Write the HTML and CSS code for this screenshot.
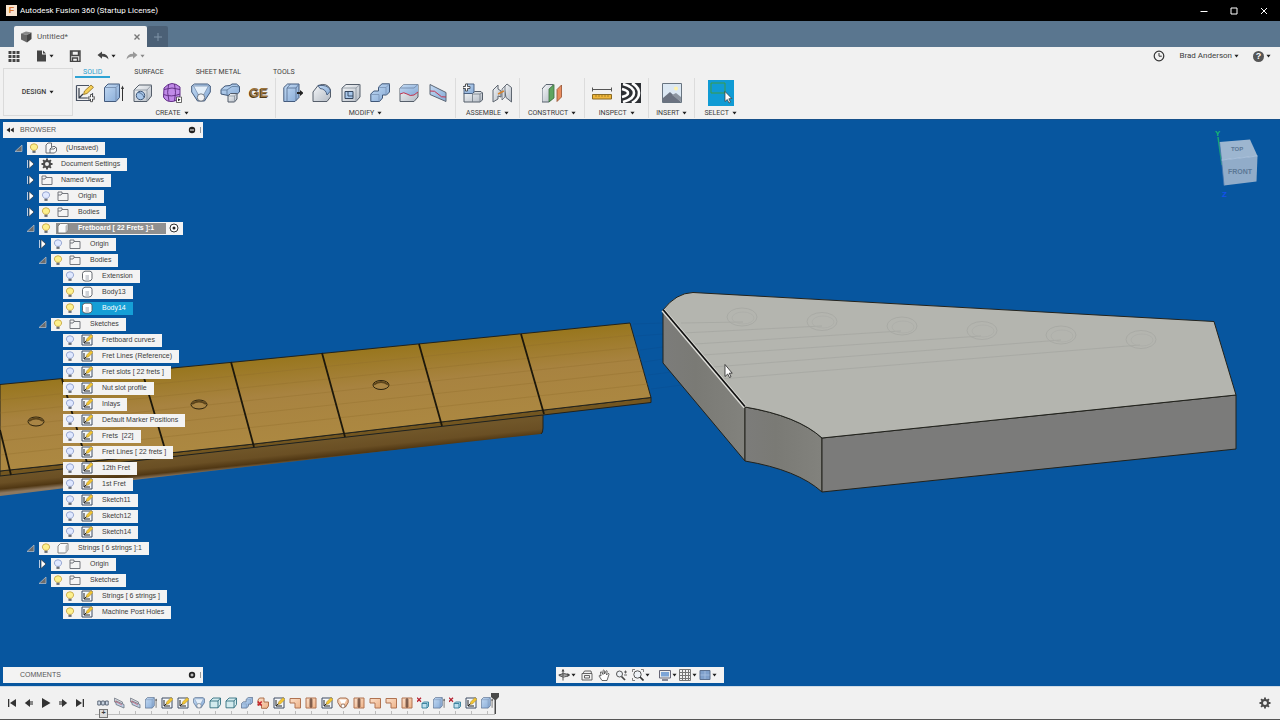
FILE: index.html
```html
<!DOCTYPE html>
<html lang="en">
<head>
<meta charset="utf-8">
<title>Autodesk Fusion 360 (Startup License)</title>
<link rel="stylesheet" href="styles.css">
</head>
<body>
<svg class="defs" aria-hidden="true">
  <defs>
    <linearGradient id="blue" x1="0" y1="0" x2="1" y2="1"><stop offset="0" stop-color="#c3daf3"/><stop offset="1" stop-color="#86aad6"/></linearGradient>
    <linearGradient id="grey" x1="0" y1="0" x2="1" y2="1"><stop offset="0" stop-color="#f6f8fa"/><stop offset="1" stop-color="#b4bbc4"/></linearGradient>
    <linearGradient id="orange" x1="0" y1="0" x2="1" y2="1"><stop offset="0" stop-color="#fbe0cb"/><stop offset="1" stop-color="#eeb287"/></linearGradient>
  </defs>
  <!-- ribbon -->
  <symbol id="r-sketch" viewBox="0 0 20 20"><path d="M1.500 2.500H14M1.500 2.500V17.500H17.500V10" fill="none" stroke="#4a5364" stroke-width="1.200"/><path d="M4 5V15H12M4 15l4-4" fill="none" stroke="#333b48" stroke-width="1.200"/><path d="M8.500 11.500l1-3.500 6.500-6 2.500 2.300-6.500 6.200z" fill="#f6cf55" stroke="#8a6a1c" stroke-width=".8"/><path d="M13 14h2.500v-2.500h2V14H20v2h-2.500v2.700h-2V16H13z" fill="#fff" stroke="#333" stroke-width=".8"/></symbol>
  <symbol id="r-extrude" viewBox="0 0 20 20"><path d="M.5 4.500L4 1h11.500v13.500L12 18.500H.5z" fill="url(#blue)" stroke="#435a7c"/><path d="M.5 4.500H12V18.500M12 4.500L15.500 1" fill="none" stroke="#7189a9" stroke-width=".8"/><path d="M18.500 18V4" stroke="#333" stroke-width="1"/><path d="M17 6l1.500-3.500L20 6z" fill="#333"/></symbol>
  <symbol id="r-revolve" viewBox="0 0 20 20"><path d="M1 7l5-5h12.500v11L14 18.500H1z" fill="url(#grey)" stroke="#555e6a"/><path d="M1 7h13v11M14 7l4.500-5" fill="none" stroke="#89929d" stroke-width=".8"/><circle cx="7.500" cy="12.500" r="4.200" fill="#a8c7ea" stroke="#405878"/><path d="M5 9.500c3 0 5 2 6 5" fill="none" stroke="#405878" stroke-width=".8"/></symbol>
  <symbol id="r-form" viewBox="0 0 20 20"><path d="M2 5q4-4.500 8-4.500T18 4v9q-2 5-8 5.500T1.500 14z" fill="#c08ae8" stroke="#64308a"/><path d="M2 6.500q8-3 16 0M1.500 11.500q8 3 16.500-.5M6.500 2q-2 7 .5 16M12.500 1q2 8 0 17" fill="none" stroke="#5c2a80" stroke-width=".9"/><path d="M14.500 14h5v5.500h-5z" fill="#fff" stroke="#444" stroke-width=".8"/><path d="M16 15.300l2.500 1.500-2.500 1.500z" fill="#222"/></symbol>
  <symbol id="r-loft" viewBox="0 0 20 20"><path d="M.7 3L3.500 1h13L19.300 3v6L13.500 18h-7L.7 9z" fill="url(#blue)" stroke="#435a7c"/><path d="M2.500 3h15l-5 9h-5z" fill="#e4effa" stroke="#6f87a7" stroke-width=".7"/><circle cx="10" cy="14.500" r="3.700" fill="#f2f2f4" stroke="#555e6a" stroke-width=".8"/></symbol>
  <symbol id="r-pipe" viewBox="0 0 20 20"><path d="M1 6.500L5 3l5-.5L12 1h4.500l3 2.500V9l-3.500 3v2h-5v-3l-3 1.500-7-1.500z" fill="url(#blue)" stroke="#3f5677"/><path d="M1 7h6l5-3.500h4l3.500.5M7 7v5" fill="none" stroke="#63809f" stroke-width=".9"/><path d="M8 13l2.500-2.500H17V16l-2.500 3H8z" fill="url(#grey)" stroke="#505a68"/><path d="M8 13h6.500v6M14.500 13l2.500-2.500" fill="none" stroke="#7d8794" stroke-width=".7"/></symbol>
  <symbol id="r-press" viewBox="0 0 20 20"><path d="M.8 4.500L4.500 1H16v13.500L12 18.500H.8z" fill="url(#blue)" stroke="#435a7c"/><path d="M4 18.500V5L7.500 1M4 5h9v13M13 5l3-4" fill="none" stroke="#5d7698" stroke-width=".9"/><path d="M14 9h3V7l3.500 3L17 13v-2h-3z" fill="#222"/></symbol>
  <symbol id="r-fillet" viewBox="0 0 20 20"><path d="M1 9l5-6.500q9-3.500 12.500 4V14L15 18.500H1z" fill="url(#grey)" stroke="#555e6a"/><path d="M6 2.500h5q6 .5 7.500 5.500L15 12q-1-6-7-6.500z" fill="url(#blue)" stroke="#435a7c" stroke-width=".9"/></symbol>
  <symbol id="r-shell" viewBox="0 0 20 20"><path d="M1 5l4-3.500h14V14l-4 4.500H1z" fill="url(#grey)" stroke="#555e6a"/><path d="M1 5h14v13.500M15 5l4-3.500" fill="none" stroke="#89929d" stroke-width=".8"/><path d="M4 8.500h8v7H4z" fill="#a8c7ea" stroke="#34465f"/><path d="M7 8.500V13h5" fill="none" stroke="#34465f" stroke-width=".9"/></symbol>
  <symbol id="r-combine" viewBox="0 0 20 20"><path d="M8.500 4L12 .8h7.500V9L16.500 12H12.500v3L9.500 18.500H.8V11l3-3h4.700z" fill="url(#blue)" stroke="#3f5677"/><path d="M8.500 4.500h7.500V12M16 4.500l3.500-3.500M.8 11.500H9v7" fill="none" stroke="#7893b5" stroke-width=".8"/></symbol>
  <symbol id="r-split" viewBox="0 0 20 20"><path d="M1 5l4-3.500h14V14l-4 4.500H1z" fill="url(#grey)" stroke="#555e6a"/><path d="M1 5l4-3.500h14V9l-4 3q-4 1-7-1t-7 0z" fill="url(#blue)"/><path d="M1 5h14l4-3.500" fill="none" stroke="#6f87a7" stroke-width=".8"/><path d="M1 11q4-2.500 7 0t7 1l4-3" fill="none" stroke="#c2344f"/></symbol>
  <symbol id="r-plane" viewBox="0 0 20 20"><path d="M2 1.500l16 8v9l-16-7z" fill="url(#blue)" stroke="#5b6674"/><path d="M2 8q5-1 8 3t8 3" fill="none" stroke="#c2344f"/></symbol>
  <symbol id="r-joint" viewBox="0 0 20 20"><path d="M1 10h8.500L12 8.500h6L19.500 10v7L17 19H1z" fill="url(#grey)" stroke="#555e6a"/><path d="M1 4l2.500-3H11v8l-1.500 1.500H1z" fill="url(#blue)" stroke="#435a7c" stroke-width=".9"/><path d="M9.500 10.500V19M9.500 11H17v8M17 11l2.500-1.500" fill="none" stroke="#6f7883" stroke-width=".8"/><path d="M0 3.500h2.500V1h2v2.500H7v2H4.500V8h-2V5.500H0z" fill="#fff" stroke="#333" stroke-width=".8"/></symbol>
  <symbol id="r-hinge" viewBox="0 0 20 20"><path d="M1 7l5-5v4l3 2v6l-3-1v3l-5 3z" fill="url(#grey)" stroke="#5f6771"/><path d="M12 4l3-3 4.500 3.500V19L14 14.500z" fill="url(#grey)" stroke="#5f6771"/><path d="M10 6l3-3v11l-3 3z" fill="#d9dde2" stroke="#5f6771" stroke-width=".8"/><path d="M6 11l6-3" stroke="#d6832e" stroke-width="1.500"/></symbol>
  <symbol id="r-construct" viewBox="0 0 20 20"><path d="M0 6l4-4.500h7V15l-4 4H0z" fill="url(#grey)" stroke="#5b6470"/><path d="M7 6l5-4.500V15l-5 4z" fill="#5fa560" stroke="#3c703f" stroke-width=".8"/><path d="M15 6.500L19.500 2v12L15 18.500z" fill="#e98c5e" stroke="#934e2e" stroke-width=".8"/></symbol>
  <symbol id="r-measure" viewBox="0 0 20 20"><path d="M.5 4.500v4M19.500 4.500v4M.5 6.500h19" stroke="#555" stroke-width="1"/><path d="M.5 11.500h19v4.500H.5z" fill="#efb63a" stroke="#8a6b24"/><path d="M4 12v2M7 12v2M10 12v2M13 12v2M16 12v2" stroke="#8a6b24" stroke-width=".7"/></symbol>
  <symbol id="r-zebra" viewBox="0 0 20 20"><path d="M0 0h20v20H0z" fill="#2d3034"/><path d="M1 6q6 1.500 6 4t-6 4M2 1q11 3 11 9T2 19M11 0q7 4 7 10t-7 10" fill="none" stroke="#fff" stroke-width="2.600"/></symbol>
  <symbol id="r-insert" viewBox="0 0 20 20"><path d="M.5.500h19v19H.5z" fill="#dce8f3" stroke="#687480"/><circle cx="14" cy="5.500" r="2" fill="#fff2ab"/><path d="M1 15l7-6 11 10H1z" fill="#6b7280"/><path d="M10 12l4-2 5 4v5z" fill="#8d95a0"/></symbol>
  <symbol id="r-select" viewBox="0 0 26 26"><path d="M0 0h26v26H0z" fill="#109bd4"/><path d="M3 3h14v10H3z" fill="none" stroke="#3c9b46"/><path d="M17 11.500v10l2.300-2 1.700 3.500 1.500-.8-1.700-3.400 3-.3z" fill="#fff" stroke="#333" stroke-width=".7"/></symbol>
  <!-- browser tree -->
  <symbol id="bulb-on" viewBox="0 0 10 12"><path d="M3.300 8Q1 6 1 4.200 1.200 1 5 .8 8.800 1 9 4.200 9 6 6.700 8z" fill="#fdf08c" stroke="#c2a23c" stroke-width=".9"/><path d="M3.300 8.500h3.400v2.300H3.300z" fill="#6b6f76"/></symbol>
  <symbol id="bulb-off" viewBox="0 0 10 12"><path d="M3.300 8Q1 6 1 4.200 1.200 1 5 .8 8.800 1 9 4.200 9 6 6.700 8z" fill="#dfe8ff" stroke="#8798c8" stroke-width=".9"/><path d="M3.300 8.500h3.400v2.300H3.300z" fill="#6b6f76"/></symbol>
  <symbol id="folder" viewBox="0 0 12 12"><path d="M1 10.500V2h4v1.500h6v7zM5 3.500L4 5H1" fill="#f4f4f4" stroke="#666a70" stroke-width=".9"/></symbol>
  <symbol id="doc" viewBox="0 0 12 12"><path d="M1 10.500V3L3 1h3.500v4.500L8 4.500h2L11.500 6v3L9.500 11H1zM6.500 5.500L5 7v4M5 7h4l2-2" fill="#f8f8f8" stroke="#5c6066" stroke-width=".9"/></symbol>
  <symbol id="gear" viewBox="0 0 12 12"><path d="M6 .5v11M.5 6h11M2.100 2.100l7.800 7.800M9.900 2.100l-7.800 7.800" stroke="#4a4a4a" stroke-width="1.900"/><circle cx="6" cy="6" r="3" fill="#f0f0f0" stroke="#4a4a4a" stroke-width="2"/></symbol>
  <symbol id="comp" viewBox="0 0 12 12"><path d="M1 4l2.500-2.500H11V8l-2.500 3H1z" fill="#fafafa" stroke="#777" stroke-width=".9"/><path d="M8.500 4L11 1.500V8l-2.500 3z" fill="#bbb"/></symbol>
  <symbol id="body" viewBox="0 0 12 12"><path d="M1.500 3.500Q2 1.500 4 1.200h5Q11 1.500 11 3.500v5Q10.500 11 8 11H4Q1.500 10.800 1.500 8.500z" fill="#fff" stroke="#555a61" stroke-width=".9"/><path d="M4.500 5H8v5.500H4.500z" fill="#d0d3d8"/></symbol>
  <symbol id="sketch" viewBox="0 0 12 12"><path d="M1 1h10v10H1z" fill="#f4f7fa" stroke="#3e4c62"/><path d="M3 3v6h6M3 9l3-3" fill="none" stroke="#222"/><path d="M5 7.500L5.500 5 10 .5 12 2.500 7.500 7z" fill="#f2c432" stroke="#8a7434" stroke-width=".4"/></symbol>
  <symbol id="closed" viewBox="0 0 10 10"><path d="M2.500 1v8" stroke="#b9cbe2"/><path d="M4 .5L9 5 4 9.500z" fill="#fff" stroke="#28303c" stroke-width=".7"/></symbol>
  <symbol id="open" viewBox="0 0 10 10"><path d="M9 2v6.500H2z" fill="#6c6c6c" stroke="#b9c3cf" stroke-width=".7"/></symbol>
  <!-- timeline -->
  <symbol id="t-group" viewBox="0 0 12 12"><path d="M.8 4h2.600v4H.8zM4.700 4h2.600v4H4.700zM8.600 4h2.600v4H8.600z" fill="#dfe9f5" stroke="#4c586a" stroke-width=".9"/></symbol>
  <symbol id="t-plane" viewBox="0 0 12 12"><path d="M1.500 1l8 4v4.500l-8-4.500z" fill="#cfd3d9" stroke="#777e89" stroke-width=".8"/><path d="M3 4l8 3.500v3.500L3 7.500z" fill="#bfd0e6" stroke="#6b7480" stroke-width=".8"/><path d="M2 4l7 4" stroke="#cc6273" stroke-width=".8"/></symbol>
  <symbol id="t-copy" viewBox="0 0 12 12"><path d="M1 4l3-3h7.500v6.500L9 10.800H1zM1 4h8v6.800M9 4l2.500-3" fill="#d3ebee" stroke="#347080" stroke-width=".9"/></symbol>
  <symbol id="t-cut" viewBox="0 0 12 12"><path d="M1 3l1.500-2H7v4h4.500v4L10 11.300H4.500V8H1z" fill="url(#orange)" stroke="#a5643e" stroke-width=".9"/><path d="M.7 4.500l4 4M4.700 4.500l-4 4" stroke="#c5202b" stroke-width="1.500"/></symbol>
  <symbol id="t-face" viewBox="0 0 12 12"><path d="M1 1.500h10.500V11H6V6H1z" fill="url(#orange)" stroke="#b07351"/></symbol>
  <symbol id="t-stitch" viewBox="0 0 12 12"><path d="M1 1h10v10H1z" fill="url(#orange)" stroke="#b07351"/><path d="M6 1v10M4.300 3h3.400M4.300 5h3.400M4.300 7h3.400M4.300 9h3.400" stroke="#503226" stroke-width=".9"/></symbol>
  <symbol id="t-oloft" viewBox="0 0 12 12"><path d="M.8 2.500L3 1h6l2.200 1.500v3L8.500 10h-5L.8 5.500z" fill="url(#orange)" stroke="#9b6244" stroke-width=".9"/><path d="M2.500 2.500h7l-2 4h-3z" fill="#fff"/><circle cx="6" cy="9" r="2" fill="#fff" stroke="#765543" stroke-width=".7"/></symbol>
  <symbol id="t-remove" viewBox="0 0 12 12"><path d="M5 6.500l1.500-1.500H11.500v4.500L10 11H5zM5 6.500h5V11" fill="#bfe1ef" stroke="#2f7c97" stroke-width=".9"/><path d="M0 .7l4 4M4 .7l-4 4" stroke="#b5202f" stroke-width="1.300"/></symbol>
  <symbol id="down" viewBox="0 0 6 4"><path d="M.5.500h5L3 3.700z" fill="#222"/></symbol>
</svg>

<header class="titlebar">
  <span class="logo">F</span>
  <h1>Autodesk Fusion 360 (Startup License)</h1>
  <div class="winbtns">
    <button aria-label="Minimize"><svg viewBox="0 0 8 8"><path d="M.5 4.500h7"/></svg></button>
    <button aria-label="Maximize"><svg viewBox="0 0 8 8"><path d="M1 1h6v6H1z"/></svg></button>
    <button aria-label="Close"><svg viewBox="0 0 8 8"><path d="M1 1l6 6M7 1L1 7"/></svg></button>
  </div>
</header>

<nav class="doctabs" aria-label="Documents">
  <div class="doctab">
    <svg class="i12" viewBox="0 0 12 12"><path d="M1 2.500L6 .5l5.500 1L7 4z" fill="#888"/><path d="M1 2.500L7 4v7.500L1 8.500z" fill="#666"/><path d="M7 4l4.500-2.500V8L7 11.500z" fill="#444"/></svg>
    <span>Untitled*</span>
    <button aria-label="Close document"><svg class="i8" viewBox="0 0 8 8"><path d="M1.500 1.500l5 5M6.500 1.500l-5 5" stroke="#777" stroke-width="1.400"/></svg></button>
  </div>
  <button class="newtab" aria-label="New document"><svg class="i8" viewBox="0 0 8 8"><path d="M4 0v8M0 4h8" stroke="#8094a8"/></svg></button>
</nav>

<div class="quick">
  <button class="q-grid" aria-label="Data panel"><svg class="i12" viewBox="0 0 12 12"><path d="M.5 1h3v3h-3zM4.500 1h3v3h-3zM8.500 1h3v3h-3zM.5 5h3v3h-3zM4.500 5h3v3h-3zM8.500 5h3v3h-3zM.5 9h3v3h-3zM4.500 9h3v3h-3zM8.500 9h3v3h-3z" fill="#444"/></svg></button>
  <button class="q-file" aria-label="File"><svg class="i12" viewBox="0 0 12 12"><path d="M2 .5h5v4h4v7H2zM8 .5L11 3.500H8z" fill="#444"/></svg><svg class="dn"><use href="#down"/></svg></button>
  <button class="q-save" aria-label="Save"><svg class="i12" viewBox="0 0 12 12"><path d="M1.500 1v10.500h9.500V1zM3 1.500v4h6.500v-4M3.500 11V8h5v3" fill="none" stroke="#444" stroke-width="1.400"/></svg></button>
  <button class="q-undo" aria-label="Undo"><svg class="i12" viewBox="0 0 12 12"><path d="M.5 5L5 1.500v2.300q6 0 6.500 5.700Q9.500 6.500 5 6.500v2.200z" fill="#444"/></svg><svg class="dn"><use href="#down"/></svg></button>
  <button class="q-redo" aria-label="Redo" disabled><svg class="i12" viewBox="0 0 12 12"><path d="M11.500 5L7 1.500v2.300q-6 0-6.500 5.700Q2.500 6.500 7 6.500v2.200z" fill="#999"/></svg><svg class="dn"><use href="#down"/></svg></button>
  <div class="account">
    <button aria-label="Job status"><svg class="i12" viewBox="0 0 12 12"><circle cx="6" cy="6" r="4.800" fill="none" stroke="#333" stroke-width="1.200"/><path d="M6 3v3.200h2.800" fill="none" stroke="#333"/></svg></button>
    <button class="user">Brad Anderson<svg class="dn"><use href="#down"/></svg></button>
    <button aria-label="Help"><span class="help">?</span><svg class="dn"><use href="#down"/></svg></button>
  </div>
</div>

<div class="ribbon">
  <button class="design">DESIGN<svg class="dn"><use href="#down"/></svg></button>
  <div class="ribmain">
    <div class="ribtabs" role="tablist">
      <button role="tab" aria-selected="true" class="on">SOLID</button>
      <button role="tab">SURFACE</button>
      <button role="tab">SHEET METAL</button>
      <button role="tab">TOOLS</button>
    </div>
    <div class="groups">
      <section class="group g-create"><div class="tools">
        <button aria-label="Create sketch"><svg><use href="#r-sketch"/></svg></button><button aria-label="Extrude"><svg><use href="#r-extrude"/></svg></button><button aria-label="Revolve"><svg><use href="#r-revolve"/></svg></button><button aria-label="Create form"><svg><use href="#r-form"/></svg></button><button aria-label="Loft"><svg><use href="#r-loft"/></svg></button><button aria-label="Pipe"><svg><use href="#r-pipe"/></svg></button><button class="ge" aria-label="Gear">GE</button></div>
        <button class="glabel">CREATE<svg class="dn"><use href="#down"/></svg></button></section>
      <section class="group"><div class="tools">
        <button aria-label="Press pull"><svg><use href="#r-press"/></svg></button><button aria-label="Fillet"><svg><use href="#r-fillet"/></svg></button><button aria-label="Shell"><svg><use href="#r-shell"/></svg></button><button aria-label="Combine"><svg><use href="#r-combine"/></svg></button><button aria-label="Split body"><svg><use href="#r-split"/></svg></button><button aria-label="Split face"><svg><use href="#r-plane"/></svg></button></div>
        <button class="glabel">MODIFY<svg class="dn"><use href="#down"/></svg></button></section>
      <section class="group"><div class="tools">
        <button aria-label="New component"><svg><use href="#r-joint"/></svg></button><button aria-label="Joint"><svg><use href="#r-hinge"/></svg></button></div>
        <button class="glabel">ASSEMBLE<svg class="dn"><use href="#down"/></svg></button></section>
      <section class="group wide"><div class="tools">
        <button aria-label="Offset plane"><svg><use href="#r-construct"/></svg></button></div>
        <button class="glabel">CONSTRUCT<svg class="dn"><use href="#down"/></svg></button></section>
      <section class="group"><div class="tools">
        <button aria-label="Measure"><svg><use href="#r-measure"/></svg></button><button aria-label="Zebra analysis"><svg><use href="#r-zebra"/></svg></button></div>
        <button class="glabel">INSPECT<svg class="dn"><use href="#down"/></svg></button></section>
      <section class="group"><div class="tools">
        <button aria-label="Insert image"><svg><use href="#r-insert"/></svg></button></div>
        <button class="glabel">INSERT<svg class="dn"><use href="#down"/></svg></button></section>
      <section class="group last"><div class="tools">
        <button aria-label="Select"><svg class="i26"><use href="#r-select"/></svg></button></div>
        <button class="glabel">SELECT<svg class="dn"><use href="#down"/></svg></button></section>
    </div>
  </div>
</div>

<main class="viewport">
  <svg class="scene" viewBox="0 120 1280 566" preserveAspectRatio="xMinYMin slice" role="img" aria-label="Fretboard and headstock model">
    <defs>
      <linearGradient id="wood" gradientUnits="userSpaceOnUse" x1="300" y1="355" x2="308" y2="438"><stop offset="0" stop-color="#98761d"/><stop offset=".45" stop-color="#a88340"/><stop offset="1" stop-color="#ac8841"/></linearGradient>
      <linearGradient id="neck" gradientUnits="userSpaceOnUse" x1="300" y1="443" x2="302" y2="463"><stop offset="0" stop-color="#705629"/><stop offset=".5" stop-color="#6a4f24"/><stop offset=".8" stop-color="#503713"/><stop offset="1" stop-color="#8d7860"/></linearGradient>
      <linearGradient id="side" x1="0" y1="0" x2="1" y2="0"><stop offset="0" stop-color="#7c7c7a"/><stop offset=".4" stop-color="#7a7a75"/><stop offset="1" stop-color="#82827d"/></linearGradient>
    </defs>
    <path d="M0 476L543 415V428Q543 433 541 434Q300 460 0 496z" fill="url(#neck)"/>
    <path d="M543 415V428Q543 433 541 434" fill="none" class="edge"/>
    <path d="M0 471L254 444 441 422 651 397.500V402.500L543 415 0 476z" fill="#735620" class="edge"/>
    <path d="M0 384.500L230 362.500 418 344 630 323 651 397.500 441 422 254 444 0 471z" fill="url(#wood)" class="edge"/>
    <g stroke="#8e6d2b" stroke-opacity=".35" stroke-width="1"><path d="M0 400L633 335M0 413L637 347M0 427L641 359M0 441L644 371M0 455L648 384"/></g>
    <g stroke="#1d180b" stroke-width="1.800"><path d="M0 430L11 475M62 379L88 466M142 371L167 456M231 362L254 447M322 353L345 437M419 344L442 426M521 334L544 414"/></g>
    <g fill="#a98545" stroke="#2b220d"><ellipse cx="381" cy="385" rx="8" ry="4.500"/><ellipse cx="199" cy="404.500" rx="8" ry="4.500"/><ellipse cx="36" cy="421.500" rx="8" ry="4.500"/></g>
    <g fill="none" stroke="#5c441a" stroke-width="2"><path d="M374 384.500q7-5 14 0M192 404q7-5 14 0M29 421q7-5 14 0"/></g>
    <g stroke="#0a4a8c" stroke-opacity=".35"><path d="M633 324L663 323M636 336L663 334M640 350L663 347M644 362L663 359M648 375L680 371M651 389L690 384"/></g>

    <path d="M663 310L745 407V461L663 363z" fill="url(#side)" class="edge"/>
    <path d="M745 407Q798 416 822 438V492Q798 470 745 461z" fill="url(#side)" class="edge"/>
    <path d="M822 438L1236 395V449L822 492z" fill="#7b7b7a" class="edge"/>
    <path d="M663 310Q676 293 693 292.500L1214 321.500 1236 395 822 438Q798 416 745 407z" fill="#b4b5af" class="edge"/>
    <g fill="none" stroke="#a6a7a2" stroke-width=".8"><path d="M743 322L681 323M822 326L683 333M901 331L695 344M981 336L703 355M1061 340L713 367M1140 345L721 379"/>
      <ellipse cx="742" cy="317" rx="15" ry="9"/><ellipse cx="822" cy="321.500" rx="15" ry="9"/><ellipse cx="902" cy="326" rx="15" ry="9"/><ellipse cx="982" cy="330.500" rx="15" ry="9"/><ellipse cx="1061" cy="335" rx="15" ry="9"/><ellipse cx="1141" cy="339.500" rx="15" ry="9"/></g>
    <g fill="none" stroke="#acada8" stroke-width=".8"><ellipse cx="743" cy="318" rx="11" ry="6"/><ellipse cx="823" cy="322" rx="11" ry="6"/><ellipse cx="903" cy="327" rx="11" ry="6"/><ellipse cx="983" cy="331" rx="11" ry="6"/><ellipse cx="1062" cy="336" rx="11" ry="6"/><ellipse cx="1142" cy="340" rx="11" ry="6"/></g>
    <path d="M663 310L745 407" stroke="#deded9" stroke-width="4"/><path d="M663 309.500L745 406.500" stroke="#111" stroke-width="1.800"/>
    <path d="M725 364.500v12l2.700-2.500 1.800 3.500 1.500-.8-1.800-3.500h3z" fill="#fff" stroke="#222" stroke-width=".8"/>

    <path d="M1222 165L1218 137" stroke="#18a873" stroke-width="1.500"/>
    <path d="M1219.500 142L1250 139.500 1257.500 156 1221.500 160z" fill="#9db6d0"/>
    <path d="M1221.500 160L1257.500 156 1256.500 181.500 1224 185.500z" fill="#91acc9"/>
    <path d="M1219.500 142L1221.500 160 1224 185.500" fill="none" stroke="#4475ae" stroke-width=".8"/>
    <path d="M1221.500 160L1257.500 156" stroke="#c0d0e4" stroke-width=".7"/>
    <text class="cube top" x="1231" y="151">TOP</text><text class="cube" x="1228" y="174">FRONT</text>
    <text class="axis" x="1215" y="136" fill="#18b873">Y</text><text class="axis" x="1222" y="197" fill="#1450ee">Z</text>
  </svg>

  <aside class="browser">
    <div class="panelbar">
      <svg class="i8" viewBox="0 0 8 8"><path d="M4 1.500v5L.5 4zM7.800 1.500v5L4.300 4z" fill="#222"/></svg>
      <h2>BROWSER</h2>
      <button aria-label="Collapse"><svg class="i8" viewBox="0 0 8 8"><circle cx="4" cy="4" r="3.200" fill="#222"/><path d="M2 4h4" stroke="#fff"/></svg></button><i class="grip"></i>
    </div>
    <ul class="tree">
      <li><div class="row"><svg class="tw"><use href="#open"/></svg><div class="box"><svg class="bulb"><use href="#bulb-on"/></svg><svg class="ico"><use href="#doc"/></svg><span>(Unsaved)</span></div></div>
      <ul>
        <li><div class="row"><svg class="tw"><use href="#closed"/></svg><div class="box nobulb"><svg class="ico"><use href="#gear"/></svg><span>Document Settings</span></div></div></li>
        <li><div class="row"><svg class="tw"><use href="#closed"/></svg><div class="box nobulb"><svg class="ico"><use href="#folder"/></svg><span>Named Views</span></div></div></li>
        <li><div class="row"><svg class="tw"><use href="#closed"/></svg><div class="box"><svg class="bulb"><use href="#bulb-off"/></svg><svg class="ico"><use href="#folder"/></svg><span>Origin</span></div></div></li>
        <li><div class="row"><svg class="tw"><use href="#closed"/></svg><div class="box"><svg class="bulb"><use href="#bulb-on"/></svg><svg class="ico"><use href="#folder"/></svg><span>Bodies</span></div></div></li>
        <li><div class="row"><svg class="tw"><use href="#open"/></svg><div class="box active"><svg class="bulb"><use href="#bulb-on"/></svg><div class="hl"><svg class="ico"><use href="#comp"/></svg><span>Fretboard [ 22 Frets ]:1</span></div><svg class="i10" viewBox="0 0 10 10"><circle cx="5" cy="5" r="4" fill="#fff" stroke="#333"/><circle cx="5" cy="5" r="1.500" fill="#222"/></svg></div></div>
        <ul>
          <li><div class="row"><svg class="tw"><use href="#closed"/></svg><div class="box"><svg class="bulb"><use href="#bulb-off"/></svg><svg class="ico"><use href="#folder"/></svg><span>Origin</span></div></div></li>
          <li><div class="row"><svg class="tw"><use href="#open"/></svg><div class="box"><svg class="bulb"><use href="#bulb-on"/></svg><svg class="ico"><use href="#folder"/></svg><span>Bodies</span></div></div>
          <ul>
            <li><div class="row leaf"><div class="box"><svg class="bulb"><use href="#bulb-off"/></svg><svg class="ico"><use href="#body"/></svg><span>Extension</span></div></div></li>
            <li><div class="row leaf"><div class="box"><svg class="bulb"><use href="#bulb-on"/></svg><svg class="ico"><use href="#body"/></svg><span>Body13</span></div></div></li>
            <li><div class="row leaf"><div class="box picked"><svg class="bulb"><use href="#bulb-on"/></svg><div class="hl"><svg class="ico"><use href="#body"/></svg><span>Body14</span></div></div></div></li>
          </ul></li>
          <li><div class="row"><svg class="tw"><use href="#open"/></svg><div class="box"><svg class="bulb"><use href="#bulb-on"/></svg><svg class="ico"><use href="#folder"/></svg><span>Sketches</span></div></div>
          <ul>
            <li><div class="row leaf"><div class="box"><svg class="bulb"><use href="#bulb-off"/></svg><svg class="ico"><use href="#sketch"/></svg><span>Fretboard curves</span></div></div></li>
            <li><div class="row leaf"><div class="box"><svg class="bulb"><use href="#bulb-off"/></svg><svg class="ico"><use href="#sketch"/></svg><span>Fret Lines (Reference)</span></div></div></li>
            <li><div class="row leaf"><div class="box"><svg class="bulb"><use href="#bulb-off"/></svg><svg class="ico"><use href="#sketch"/></svg><span>Fret slots [ 22 frets ]</span></div></div></li>
            <li><div class="row leaf"><div class="box"><svg class="bulb"><use href="#bulb-off"/></svg><svg class="ico"><use href="#sketch"/></svg><span>Nut slot profile</span></div></div></li>
            <li><div class="row leaf"><div class="box"><svg class="bulb"><use href="#bulb-off"/></svg><svg class="ico"><use href="#sketch"/></svg><span>Inlays</span></div></div></li>
            <li><div class="row leaf"><div class="box"><svg class="bulb"><use href="#bulb-off"/></svg><svg class="ico"><use href="#sketch"/></svg><span>Default Marker Positions</span></div></div></li>
            <li><div class="row leaf"><div class="box"><svg class="bulb"><use href="#bulb-off"/></svg><svg class="ico"><use href="#sketch"/></svg><span>Frets&nbsp; [22]</span></div></div></li>
            <li><div class="row leaf"><div class="box"><svg class="bulb"><use href="#bulb-off"/></svg><svg class="ico"><use href="#sketch"/></svg><span>Fret Lines [ 22 frets ]</span></div></div></li>
            <li><div class="row leaf"><div class="box"><svg class="bulb"><use href="#bulb-off"/></svg><svg class="ico"><use href="#sketch"/></svg><span>12th Fret</span></div></div></li>
            <li><div class="row leaf"><div class="box"><svg class="bulb"><use href="#bulb-off"/></svg><svg class="ico"><use href="#sketch"/></svg><span>1st Fret</span></div></div></li>
            <li><div class="row leaf"><div class="box"><svg class="bulb"><use href="#bulb-off"/></svg><svg class="ico"><use href="#sketch"/></svg><span>Sketch11</span></div></div></li>
            <li><div class="row leaf"><div class="box"><svg class="bulb"><use href="#bulb-off"/></svg><svg class="ico"><use href="#sketch"/></svg><span>Sketch12</span></div></div></li>
            <li><div class="row leaf"><div class="box"><svg class="bulb"><use href="#bulb-off"/></svg><svg class="ico"><use href="#sketch"/></svg><span>Sketch14</span></div></div></li>
          </ul></li>
        </ul></li>
        <li><div class="row"><svg class="tw"><use href="#open"/></svg><div class="box"><svg class="bulb"><use href="#bulb-on"/></svg><svg class="ico"><use href="#comp"/></svg><span>Strings [ 6 strings ]:1</span></div></div>
        <ul>
          <li><div class="row"><svg class="tw"><use href="#closed"/></svg><div class="box"><svg class="bulb"><use href="#bulb-off"/></svg><svg class="ico"><use href="#folder"/></svg><span>Origin</span></div></div></li>
          <li><div class="row"><svg class="tw"><use href="#open"/></svg><div class="box"><svg class="bulb"><use href="#bulb-on"/></svg><svg class="ico"><use href="#folder"/></svg><span>Sketches</span></div></div>
          <ul>
            <li><div class="row leaf"><div class="box"><svg class="bulb"><use href="#bulb-on"/></svg><svg class="ico"><use href="#sketch"/></svg><span>Strings [ 6 strings ]</span></div></div></li>
            <li><div class="row leaf"><div class="box"><svg class="bulb"><use href="#bulb-on"/></svg><svg class="ico"><use href="#sketch"/></svg><span>Machine Post Holes</span></div></div></li>
          </ul></li>
        </ul></li>
      </ul></li>
    </ul>
  </aside>

  <div class="bottombar">
    <div class="panelbar comments">
      <h2>COMMENTS</h2>
      <button aria-label="Expand comments"><svg class="i8" viewBox="0 0 8 8"><circle cx="4" cy="4" r="3.200" fill="#222"/><path d="M2.500 4h3M4 2.500v3" stroke="#fff" stroke-width=".9"/></svg></button><i class="grip"></i>
    </div>
    <div class="navbar">
      <button aria-label="Orbit"><svg class="i12" viewBox="0 0 12 12"><path d="M5 .5v11M1 6q4-3 9.500-.5M1 6.500q4 3 9 .5M.5 6h11" fill="none" stroke="#444" stroke-width=".9"/><path d="M3.500 2.500L5 0l1.500 2.500zM9.500 4l2.500 2-2.500 2z" fill="#444"/></svg><svg class="dn"><use href="#down"/></svg></button>
      <button aria-label="Look at"><svg class="i12" viewBox="0 0 12 12"><path d="M1 4.500h10V11H1zM3.500 6.500h5v2.500h-5zM2 4.500L3.500 2H10l.5 2.500" fill="none" stroke="#555" stroke-width=".9"/></svg></button>
      <button aria-label="Pan"><svg class="i12" viewBox="0 0 12 12"><path d="M4 11.500L1 7q0-1.500 2 0L2.500 3q.5-1 1.200 0L5 5.500 5 1.500q.7-1 1.300 0l.3 3.500L8 2q1-.8 1.200.4L8.500 6 10 4.500q1.200-.2 1 .8L9 11.500z" fill="#fff" stroke="#444" stroke-width=".8"/></svg></button>
      <button aria-label="Zoom"><svg class="i12" viewBox="0 0 12 12"><circle cx="4.500" cy="5" r="3" fill="#eef2f6" stroke="#555"/><path d="M6.500 7.500L10 11" stroke="#444" stroke-width="1.700"/><path d="M9 3h3M10.500 1.500v3M9 6h3" stroke="#444" stroke-width=".8"/></svg></button>
      <button aria-label="Fit"><svg class="i12" viewBox="0 0 12 12"><path d="M.5 3V.5H3M9 .5h2.500V3M.5 9v2.500H3" fill="none" stroke="#666" stroke-width=".8"/><circle cx="5.500" cy="5.500" r="3.700" fill="#eef2f6" stroke="#555"/><path d="M8 8l3.500 3.500" stroke="#333" stroke-width="1.700"/></svg><svg class="dn"><use href="#down"/></svg></button>
      <button class="sp" aria-label="Display settings"><svg class="i12" viewBox="0 0 12 12"><path d="M.5 1.500h11v7.500H.5z" fill="#eee" stroke="#667"/><path d="M2 3h8v4.500H2z" fill="#7da4d6"/><path d="M3 11h6" stroke="#667" stroke-width="1.500"/></svg><svg class="dn"><use href="#down"/></svg></button>
      <button class="tight" aria-label="Grid"><svg class="i12" viewBox="0 0 12 12"><path d="M.5.500v11M3.500.500v11M6.500.500v11M9.500.500v11M.5.500h11M.5 3.500h11M.5 6.500h11M.5 9.500h11M11.500.500v11M.5 11.500h11" stroke="#777" fill="none"/></svg><svg class="dn"><use href="#down"/></svg></button>
      <button class="tight" aria-label="Viewports"><svg class="i12" viewBox="0 0 12 12"><path d="M1 1.500h10v9H1z" fill="#7fa0cc" stroke="#5d718f"/><path d="M6 2v8M1.500 6h9" stroke="#a8c1e2" stroke-width=".8"/></svg><svg class="dn"><use href="#down"/></svg></button>
    </div>
  </div>
</main>

<footer class="timeline">
  <div class="play">
    <button aria-label="First"><svg class="i10" viewBox="0 0 10 10"><path d="M1 1h1.300v8H1zM9 1v8L3 5z" fill="#333"/></svg></button>
    <button aria-label="Previous"><svg class="i10" viewBox="0 0 10 10"><path d="M6 1v8L.8 5z" fill="#333"/><path d="M6 3h3v4H6z" fill="#888"/></svg></button>
    <button aria-label="Play"><svg class="i10" viewBox="0 0 10 10"><path d="M1 0v10L9.500 5z" fill="#333"/></svg></button>
    <button aria-label="Next"><svg class="i10" viewBox="0 0 10 10"><path d="M4 1v8l5.200-4z" fill="#333"/><path d="M1 3h3v4H1z" fill="#888"/></svg></button>
    <button aria-label="Last"><svg class="i10" viewBox="0 0 10 10"><path d="M7.700 1H9v8H7.700zM1 1v8l6-4z" fill="#333"/></svg></button>
  </div>
  <ol class="steps">
    <li class="first"><svg><use href="#t-group"/></svg></li>
    <li><svg><use href="#t-plane"/></svg></li><li><svg><use href="#t-plane"/></svg></li>
    <li><svg><use href="#r-extrude"/></svg></li>
    <li><svg><use href="#sketch"/></svg></li><li><svg><use href="#sketch"/></svg></li>
    <li><svg><use href="#r-loft"/></svg></li>
    <li><svg><use href="#t-copy"/></svg></li><li><svg><use href="#t-copy"/></svg></li>
    <li><svg><use href="#r-combine"/></svg></li>
    <li><svg><use href="#t-cut"/></svg></li>
    <li><svg><use href="#sketch"/></svg></li>
    <li><svg><use href="#t-face"/></svg></li><li><svg><use href="#t-stitch"/></svg></li>
    <li><svg><use href="#sketch"/></svg></li>
    <li><svg><use href="#t-oloft"/></svg></li><li><svg><use href="#t-stitch"/></svg></li>
    <li><svg><use href="#t-face"/></svg></li><li><svg><use href="#t-face"/></svg></li>
    <li><svg><use href="#t-stitch"/></svg></li>
    <li><svg><use href="#t-remove"/></svg></li><li><svg><use href="#r-extrude"/></svg></li>
    <li><svg><use href="#t-remove"/></svg></li><li><svg><use href="#sketch"/></svg></li>
    <li class="end"><svg><use href="#r-extrude"/></svg></li>
  </ol>
  <svg class="marker" viewBox="0 0 8 22"><path d="M0 0h8v4L5 7v14H3.500V7L0 4z" fill="#4a4a4a"/></svg>
  <button class="settings" aria-label="Timeline settings"><svg class="i12"><use href="#gear"/></svg></button>
</footer>
</body>
</html>
```
FILE: styles.css
```css
* { box-sizing: border-box; }
body {
  margin: 0;
  height: 100vh;
  display: flex;
  flex-direction: column;
  overflow: hidden;
  background: #f1f1f1;
  color: #3c3c3c;
  font: 7px/10px Roboto, "Liberation Sans", sans-serif;
}
button {
  border: 0;
  padding: 0;
  background: none;
  color: inherit;
  font: inherit;
  display: flex;
  align-items: center;
}
svg { display: block; flex: none; }
ul, ol { list-style: none; margin: 0; padding: 0; }
h1, h2 { margin: 0; font: inherit; }
.defs { position: absolute; width: 0; height: 0; }
.i8 { width: 8px; height: 8px; }
.i10 { width: 10px; height: 10px; }
.i12 { width: 12px; height: 12px; }
.i26 { width: 26px; height: 26px; }
.dn { width: 5px; height: 4px; margin-left: 3px; }

/* window title */
.titlebar {
  flex: none;
  height: 21px;
  display: flex;
  align-items: center;
  gap: 3px;
  padding-left: 6px;
  background: #000;
  color: #fff;
}
.titlebar h1 { font: 8px/10px Roboto, sans-serif; }
.logo {
  width: 11px;
  height: 11px;
  background: #f7e3cf;
  color: #d9772b;
  font: bold 9px/11px "Liberation Sans", sans-serif;
  text-align: center;
}
.winbtns { margin-left: auto; display: flex; padding-right: 1px; }
.winbtns button { width: 30px; justify-content: center; }
.winbtns svg { width: 8px; height: 8px; fill: none; stroke: #fff; stroke-width: 1; }

/* document tabs */
.doctabs {
  flex: none;
  height: 26px;
  display: flex;
  align-items: flex-end;
  padding-left: 14px;
  background: #5a768f;
}
.doctab {
  width: 133px;
  height: 21px;
  display: flex;
  align-items: center;
  gap: 5px;
  padding: 0 6px;
  border-radius: 2px 2px 0 0;
  background: #f1f1f1;
  color: #555;
  font-size: 8px;
}
.doctab button { margin-left: auto; }
.newtab { width: 21px; height: 21px; justify-content: center; background: #4b6076; border-radius: 2px 2px 0 0; }

/* quick access */
.quick { flex: none; height: 18px; display: flex; align-items: center; padding-left: 8px; }
.quick .dn { margin-left: 2px; }
.q-grid { width: 27px; }
.q-file { width: 34px; }
.q-save { width: 28px; }
.q-undo { width: 29px; }
.q-redo .dn { opacity: .5; }
.account { margin-left: auto; display: flex; align-items: center; gap: 14px; padding-right: 9px; }
.user { font-size: 8px; }
.help {
  width: 11px;
  height: 11px;
  border-radius: 50%;
  background: #555;
  color: #fff;
  font: bold 9px/11px "Liberation Sans", sans-serif;
  text-align: center;
}

/* ribbon */
.ribbon { flex: none; height: 55px; display: flex; border-bottom: 1px solid #16508a; }
.design {
  width: 70px;
  margin: 3px 2px 3px 3px;
  justify-content: center;
  border: 1px solid #dadada;
  font-weight: 500;
}
.ribtabs { display: flex; gap: 16px; height: 13px; }
.ribtabs button { padding: 2px 8px 0; border-bottom: 2px solid transparent; }
.ribtabs .on { color: #2a9fd0; border-color: #2fa3d4; }
.groups { display: flex; }
.group {
  display: flex;
  flex-direction: column;
  align-items: center;
  padding: 0 7px;
  border-right: 1px solid #dcdcdc;
  height: 40px;
}
.g-create { padding: 0 6px 0 0; }
.wide { padding: 0 8px; }
.last { border: 0; padding-left: 9px; }
.tools { display: flex; gap: 9px; height: 30px; align-items: center; }
.tools svg { width: 20px; height: 20px; overflow: visible; }
.tools .i26 { width: 26px; height: 26px; }
.ge {
  width: 20px;
  justify-content: center;
  color: #9a7440;
  font: 900 13px/20px "Liberation Sans", sans-serif;
  text-shadow: -1px 1px 0 #4e3919;
}

/* model view */
.viewport {
  flex: 1;
  min-height: 0;
  position: relative;
  display: flex;
  flex-direction: column;
  justify-content: space-between;
  padding: 2px 3px 3px;
  background: #07569f;
  font-family: "Liberation Sans", sans-serif;
}
.scene { position: absolute; inset: 0; width: 100%; height: 100%; }
.edge { stroke: #22221c; stroke-width: 1; }
.cube { font: bold 7px "Liberation Sans", sans-serif; fill: #5c7896; }
.top { font-size: 6px; }
.axis { font: bold 8px "Liberation Sans", sans-serif; }
.browser, .bottombar { position: relative; }
.panelbar {
  width: 200px;
  height: 16px;
  display: flex;
  align-items: center;
  padding: 0 2px 0 3px;
  gap: 6px;
  background: #f3f3f3;
  color: #555;
}
.panelbar h2 { margin-right: auto; }
.panelbar button { margin-right: -3px; }
.comments { padding-left: 17px; }
.grip { width: 2px; height: 6px; border-right: 1px solid #999; }
.tree { padding: 2px 0 0 10px; }
.tree ul { padding-left: 12px; }
.row { display: flex; align-items: center; height: 16px; }
.leaf { padding-left: 14px; }
.tw { width: 10px; height: 10px; margin-right: 4px; }
.box {
  display: flex;
  align-items: center;
  height: 13px;
  padding: 0 7px 0 2px;
  background: #f3f3f3;
  white-space: nowrap;
}
.bulb { width: 10px; height: 11px; }
.ico { width: 12px; height: 12px; margin: 0 9px 0 6px; }
.nobulb .ico { margin: 0 8px 0 0; }
.hl { display: flex; align-items: center; height: 13px; color: #fff; }
.active { padding-right: 4px; }
.active .hl { height: 11px; margin: 0 3px 0 5px; padding-right: 12px; background: #8f8f8f; font-weight: bold; }
.active .ico, .picked .ico { margin-left: 1px; }
.picked { padding-right: 0; }
.picked .hl { margin-left: 5px; padding-right: 7px; background: #159fd6; }

.bottombar { display: grid; grid-template-columns: 1fr auto 1fr; align-items: center; }
.navbar { display: flex; align-items: center; gap: 5px; height: 16px; padding: 0 7px 0 2px; background: #f3f3f3; }
.navbar .dn { margin-left: 1px; }
.navbar .sp { margin-left: 4px; }
.navbar .tight { margin-left: -3px; }

/* timeline */
.timeline {
  flex: none;
  height: 34px;
  display: flex;
  padding: 0 9px 0 7px;
  border-bottom: 1px solid #555;
  border-top: 1px solid #cfdbe6;
}
.play { display: flex; gap: 7px; height: 32px; align-items: center; width: 88px; }
.play button { width: 10px; }
.steps { display: flex; height: 28px; padding-top: 10px; }
.steps li { position: relative; width: 16px; padding: 0 2px; border-bottom: 1px solid #bdbdbd; }
.steps svg { width: 12px; height: 12px; }
.steps li::after { content: ""; position: absolute; left: 8px; bottom: 0; width: 1px; height: 3px; background: #bdbdbd; }
.steps .first::after {
  content: "+";
  left: 4px;
  bottom: -4px;
  width: 7px;
  height: 7px;
  border: 1px solid #777;
  background: #ddd;
  font: bold 7px/5px "Liberation Sans", sans-serif;
  text-align: center;
}
.marker { width: 8px; height: 22px; margin: 6px 0 0 -4px; }
.settings { margin-left: auto; height: 32px; }
```
